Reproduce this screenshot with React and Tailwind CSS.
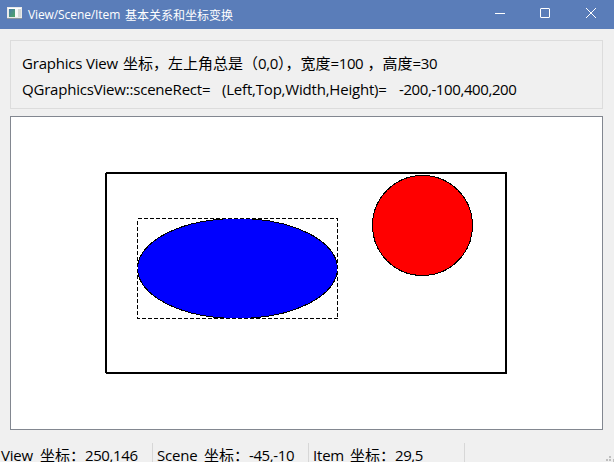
const LATIN = "font-['Open_Sans','Noto_Sans_CJK_SC',sans-serif]";
const CJK = "font-['Noto_Sans_CJK_SC',sans-serif]";

// A run of Latin text with a fixed advance width
function Latin({ className, children }) {
  return <span className={`${LATIN} shrink-0 whitespace-pre ${className}`}>{children}</span>;
}

function Han({ children }) {
  return <span className={`${CJK} shrink-0 whitespace-pre`}>{children}</span>;
}

function TitleBar() {
  return (
    <header className="flex h-[29px] shrink-0 items-center bg-[#5a7db9] pl-[7px] text-white">
      <svg width="16" height="14" viewBox="0 0 16 14" className="-mt-[3px] shrink-0" shapeRendering="crispEdges">
        <defs>
          <linearGradient id="appIcon" x1="0" y1="0" x2="1" y2="1">
            <stop offset="0" stopColor="#4779a8" />
            <stop offset="1" stopColor="#4da764" />
          </linearGradient>
        </defs>
        <rect x="0" y="1" width="15" height="12" fill="#8c969c" />
        <rect x="0" y="1" width="15" height="11" fill="#e9eaea" />
        <rect x="1" y="2" width="13" height="1" fill="#ffffff" />
        <rect x="2" y="3" width="6" height="8" fill="url(#appIcon)" />
        <rect x="8" y="3" width="3" height="8" fill="#f8f8f8" />
        <rect x="11" y="3" width="3" height="8" fill="#d5dad7" />
      </svg>
      <h1 className="ml-[5px] flex h-[29px] items-center text-[12px] leading-[28px] font-normal">
        <Latin className="w-[97px] tracking-[-0.1px]">View/Scene/Item</Latin>
        <Han>基本关系和坐标变换</Han>
      </h1>
      <div className="ml-auto flex pr-[18px]">
        <svg width="102" height="12" viewBox="0 0 102 12" className="-mt-[3px]" fill="none" stroke="white">
          <path d="M1 6.5h10" />
          <rect x="46.5" y="1.5" width="9" height="9" rx="0.5" />
          <path d="M92 1l10 10M102 1l-10 10" />
        </svg>
      </div>
    </header>
  );
}

function InfoPanel() {
  return (
    <section className="mx-[10px] mt-[11px] mr-[11px] h-[69px] shrink-0 border border-[#dcdcdc] pt-[9px] pl-[11px] text-[15px] leading-[26px]">
      <p className="flex">
        <Latin className="w-[101px] tracking-[-0.2px]">Graphics View</Latin>
        <Han>坐标，左上角总是（</Han>
        <Latin className="w-[20px] tracking-[-0.4px]">0,0</Latin>
        <Han>），宽度</Han>
        <Latin className="w-[37px] tracking-[-0.4px]">=100</Latin>
        <Han>，高度</Han>
        <Latin className="w-[30px] tracking-[-0.4px]">=30</Latin>
      </p>
      <p className="flex">
        <Latin className="w-[200px] tracking-[-0.2px]">QGraphicsView::sceneRect=</Latin>
        <Latin className="w-[177px] tracking-[-0.2px]">(Left,Top,Width,Height)=</Latin>
        <Latin className="w-[129px] tracking-[-0.4px]">-200,-100,400,200</Latin>
      </p>
    </section>
  );
}

function GraphicsView() {
  return (
    <section className="mt-[7px] ml-[10px] h-[314px] w-[593px] shrink-0 border border-[#828790] bg-white">
      <svg width="591" height="312" viewBox="11 117 591 312" shapeRendering="crispEdges" className="block">
        <rect x="106" y="173" width="400" height="200" fill="none" stroke="black" strokeWidth="2" strokeLinejoin="bevel" />
        <ellipse cx="237.5" cy="268.5" rx="100" ry="50" fill="#0000ff" stroke="black" />
        <path d="M137.5 218.5h200v100h-200z" fill="none" stroke="white" />
        <path d="M137.5 218.5h200v100h-200z" fill="none" stroke="black" strokeDasharray="4 2" />
        <circle cx="422.5" cy="225.5" r="50" fill="#ff0000" stroke="black" />
      </svg>
    </section>
  );
}

function StatusBar() {
  return (
    <footer className="flex h-[32px] shrink-0 overflow-hidden pt-[13px] text-[15px] leading-[24px]">
      <div className="flex w-[153px] shrink-0 border-r border-[#d7d7d7] pl-px">
        <Latin className="w-[39px] tracking-[-0.2px]">View</Latin>
        <Han>坐标：</Han>
        <Latin className="tracking-[-0.4px]">250,146</Latin>
      </div>
      <div className="flex w-[156px] shrink-0 border-r border-[#d7d7d7] pl-[4px]">
        <Latin className="w-[47px] tracking-[-0.2px]">Scene</Latin>
        <Han>坐标：</Han>
        <Latin className="tracking-[-0.4px]">-45,-10</Latin>
      </div>
      <div className="flex w-[156px] shrink-0 border-r border-[#d7d7d7] pl-[4px]">
        <Latin className="w-[37px] tracking-[-0.2px]">Item</Latin>
        <Han>坐标：</Han>
        <Latin className="tracking-[-0.4px]">29,5</Latin>
      </div>
      <svg width="8" height="8" viewBox="0 0 8 8" className="mr-0 ml-auto self-end" fill="#bfbfbf" shapeRendering="crispEdges">
        <path d="M3 2h2v2h-2zM0 5h2v2H0zM3 5h2v2H3zM7 5h1v3H7z" />
      </svg>
    </footer>
  );
}

export default function App() {
  return (
    <main className="flex h-[462px] w-[614px] flex-col overflow-hidden bg-[#f0f0f0] text-black">
      <TitleBar />
      <InfoPanel />
      <GraphicsView />
      <StatusBar />
    </main>
  );
}
